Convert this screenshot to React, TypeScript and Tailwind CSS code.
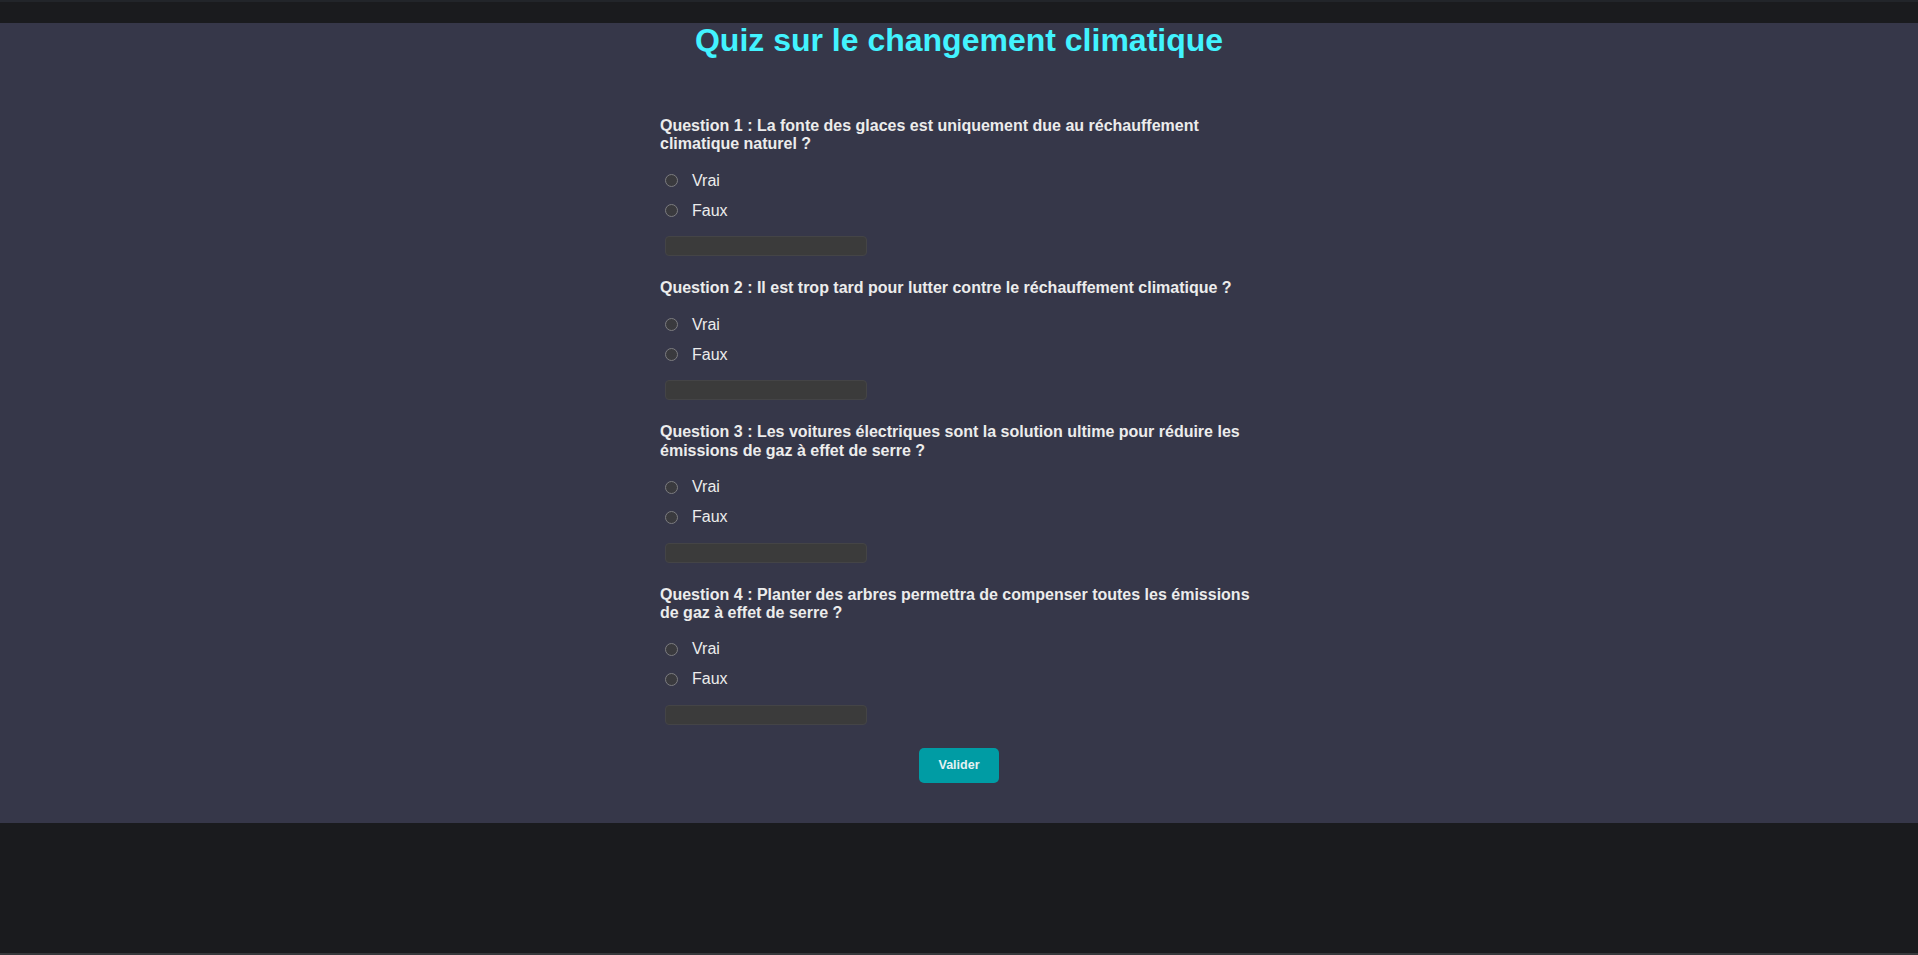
import { useState } from 'react';

const questions = [
  'Question 1 : La fonte des glaces est uniquement due au réchauffement climatique naturel ?',
  'Question 2 : Il est trop tard pour lutter contre le réchauffement climatique ?',
  'Question 3 : Les voitures électriques sont la solution ultime pour réduire les émissions de gaz à effet de serre ?',
  'Question 4 : Planter des arbres permettra de compenser toutes les émissions de gaz à effet de serre ?',
];

function Radio({ checked }: { checked: boolean }) {
  return (
    <span className="w-[13px] h-[13px] rounded-full border border-[#7c7c80] bg-[#3a3a3e] flex items-center justify-center shrink-0">
      {checked && <span className="w-[7px] h-[7px] rounded-full bg-[#0a9ca6]" />}
    </span>
  );
}

export default function App() {
  const [answers, setAnswers] = useState<Record<number, string>>({});

  return (
    <div className="min-h-[955px] bg-[#1a1b1e] flex flex-col font-['Liberation_Sans',Arial,sans-serif]">
      <div className="h-[2px] bg-[#22252a]" />
      <div className="h-[21px]" />

      <main className="h-[800px] bg-[#363749] flex flex-col items-center">
        <h1 className="text-[32px] leading-[34px] font-bold text-[#42f3ff]">
          Quiz sur le changement climatique
        </h1>

        <form className="w-[600px] ml-[2px] mt-[60px] flex flex-col" onSubmit={(e) => e.preventDefault()}>
          {questions.map((q, i) => (
            <div key={i} className="flex flex-col mb-[23px]">
              <p className="text-[16px] leading-[18.4px] font-bold text-[#ececec] mb-[12px]">{q}</p>
              {['Vrai', 'Faux'].map((opt) => (
                <label
                  key={opt}
                  className="h-[30px] flex items-center pl-[5px] cursor-pointer"
                  onClick={() => setAnswers({ ...answers, [i]: opt })}
                >
                  <Radio checked={answers[i] === opt} />
                  <span className="ml-[14px] text-[16px] text-[#ececec]">{opt}</span>
                </label>
              ))}
              <input
                type="text"
                className="ml-[5px] mt-[10.5px] w-[202px] h-[20px] rounded-[4px] bg-[#3b3b3b] border border-[#444446] outline-none text-[13px] text-[#ddd] px-1"
              />
            </div>
          ))}

          <div className="flex justify-center -ml-[2px]">
            <button
              type="submit"
              className="w-[80px] h-[35px] rounded-[5px] bg-[#009ca4] text-[12.5px] font-bold text-[#e4f2f2]"
            >
              Valider
            </button>
          </div>
        </form>
      </main>

      <div className="flex-1" />
      <div className="h-[2px] bg-[#36383b]" />
    </div>
  );
}
